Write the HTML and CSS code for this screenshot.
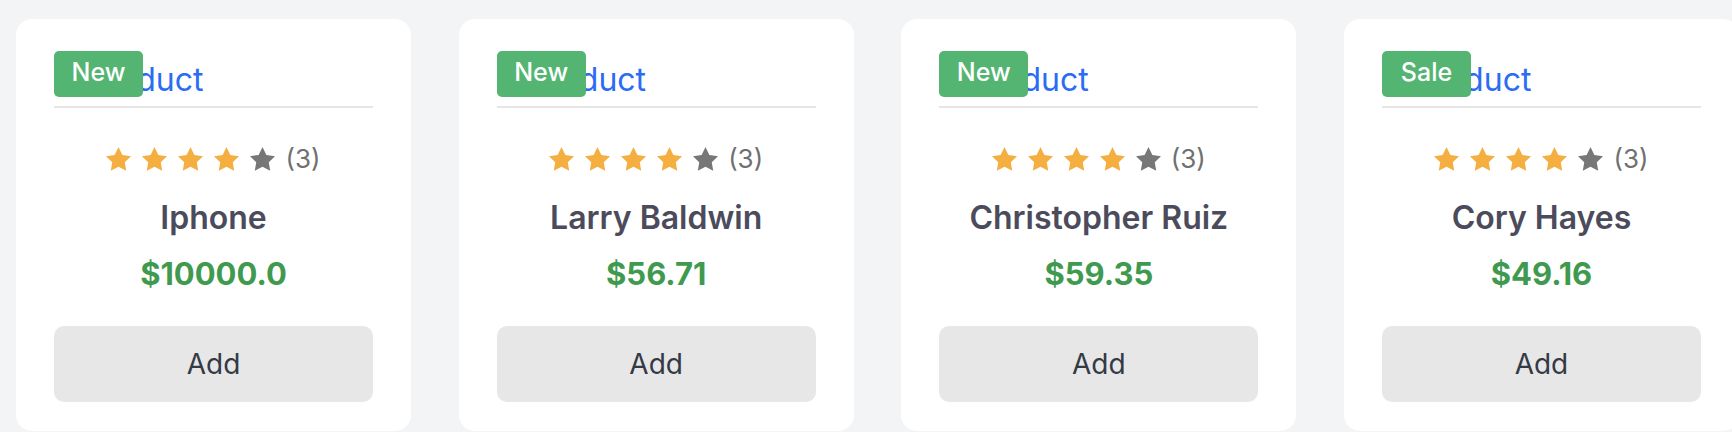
FILE: index.html
```html
<!DOCTYPE html>
<html lang="en">
<head>
<meta charset="utf-8">
<title>Products</title>
<link rel="stylesheet" href="styles.css">
</head>
<body>
<svg width="0" height="0" class="defs" aria-hidden="true">
  <defs>
    <path id="star" d="M12 2l3.09 6.26L22 9.27l-5 4.87 1.18 6.88L12 17.77l-6.18 3.25L7 14.14 2 9.27l6.91-1.01L12 2z"/>
  </defs>
</svg>
<main class="grid">
  <article class="card">
    <header class="card-head"><span class="badge">New</span><a class="title" href="#">Product</a></header>
    <div class="rating">
      <svg class="star on" viewBox="2 2 20 19.1"><use href="#star"/></svg>
      <svg class="star on" viewBox="2 2 20 19.1"><use href="#star"/></svg>
      <svg class="star on" viewBox="2 2 20 19.1"><use href="#star"/></svg>
      <svg class="star on" viewBox="2 2 20 19.1"><use href="#star"/></svg>
      <svg class="star off" viewBox="2 2 20 19.1"><use href="#star"/></svg>
      <span class="count">(3)</span>
    </div>
    <h3 class="name">Iphone</h3>
    <p class="price">$10000.0</p>
    <button class="add">Add</button>
  </article>
  <article class="card">
    <header class="card-head"><span class="badge">New</span><a class="title" href="#">Product</a></header>
    <div class="rating">
      <svg class="star on" viewBox="2 2 20 19.1"><use href="#star"/></svg>
      <svg class="star on" viewBox="2 2 20 19.1"><use href="#star"/></svg>
      <svg class="star on" viewBox="2 2 20 19.1"><use href="#star"/></svg>
      <svg class="star on" viewBox="2 2 20 19.1"><use href="#star"/></svg>
      <svg class="star off" viewBox="2 2 20 19.1"><use href="#star"/></svg>
      <span class="count">(3)</span>
    </div>
    <h3 class="name">Larry Baldwin</h3>
    <p class="price">$56.71</p>
    <button class="add">Add</button>
  </article>
  <article class="card">
    <header class="card-head"><span class="badge">New</span><a class="title" href="#">Product</a></header>
    <div class="rating">
      <svg class="star on" viewBox="2 2 20 19.1"><use href="#star"/></svg>
      <svg class="star on" viewBox="2 2 20 19.1"><use href="#star"/></svg>
      <svg class="star on" viewBox="2 2 20 19.1"><use href="#star"/></svg>
      <svg class="star on" viewBox="2 2 20 19.1"><use href="#star"/></svg>
      <svg class="star off" viewBox="2 2 20 19.1"><use href="#star"/></svg>
      <span class="count">(3)</span>
    </div>
    <h3 class="name">Christopher Ruiz</h3>
    <p class="price">$59.35</p>
    <button class="add">Add</button>
  </article>
  <article class="card">
    <header class="card-head"><span class="badge">Sale</span><a class="title" href="#">Product</a></header>
    <div class="rating">
      <svg class="star on" viewBox="2 2 20 19.1"><use href="#star"/></svg>
      <svg class="star on" viewBox="2 2 20 19.1"><use href="#star"/></svg>
      <svg class="star on" viewBox="2 2 20 19.1"><use href="#star"/></svg>
      <svg class="star on" viewBox="2 2 20 19.1"><use href="#star"/></svg>
      <svg class="star off" viewBox="2 2 20 19.1"><use href="#star"/></svg>
      <span class="count">(3)</span>
    </div>
    <h3 class="name">Cory Hayes</h3>
    <p class="price">$49.16</p>
    <button class="add">Add</button>
  </article>
</main>
</body>
</html>
```
FILE: styles.css
```css
html, body {
  margin: 0;
  padding: 0;
  background: #f3f4f6;
  overflow: hidden;
  height: 432px;
}
body {
  font-family: Inter, "Noto Sans", sans-serif;
}
.defs {
  position: absolute;
  width: 0;
  height: 0;
}
.grid {
  display: grid;
  grid-template-columns: repeat(4, 395px);
  column-gap: 47.67px;
  padding: 19px 0 0 16px;
  width: max-content;
}
.card {
  background: #ffffff;
  border-radius: 16px;
  padding: 32px 38px 29px;
  box-sizing: border-box;
  display: flex;
  flex-direction: column;
  align-items: stretch;
}
.card-head {
  position: relative;
  padding: 10px 0 7px 31px;
  border-bottom: 2px solid #e6e6e6;
  height: 38px;
}
.badge {
  position: absolute;
  top: 0;
  left: 0;
  width: 89px;
  height: 46px;
  box-sizing: border-box;
  background: #53b571;
  color: #ffffff;
  border-radius: 5px;
  font-size: 25px;
  font-weight: 500;
  line-height: 42px;
  text-align: center;
}
.title {
  color: #2b6cf5;
  text-decoration: none;
  font-size: 32px;
  line-height: 38px;
  display: block;
}
.rating {
  margin-top: 35px;
  height: 32px;
  display: flex;
  align-items: center;
  justify-content: center;
  gap: 11px;
}
.star {
  width: 25px;
  height: 24px;
}
.star.on { fill: #f5ae40; }
.star.off { fill: #777777; }
.count {
  color: #707070;
  font-size: 26px;
  line-height: 32px;
  margin-left: -1px;
}
.name {
  margin: 24px 0 0;
  font-size: 32px;
  line-height: 38px;
  font-weight: 600;
  color: #4b4b5c;
  text-align: center;
}
.price {
  margin: 18px 0 0;
  font-size: 31px;
  line-height: 38px;
  font-weight: 700;
  color: #3f9a4f;
  text-align: center;
}
.add {
  margin-top: 33px;
  height: 76px;
  border: none;
  border-radius: 10px;
  background: #e7e7e7;
  color: #333a45;
  font-family: Inter, "Noto Sans", sans-serif;
  font-size: 28px;
  cursor: pointer;
}
```
